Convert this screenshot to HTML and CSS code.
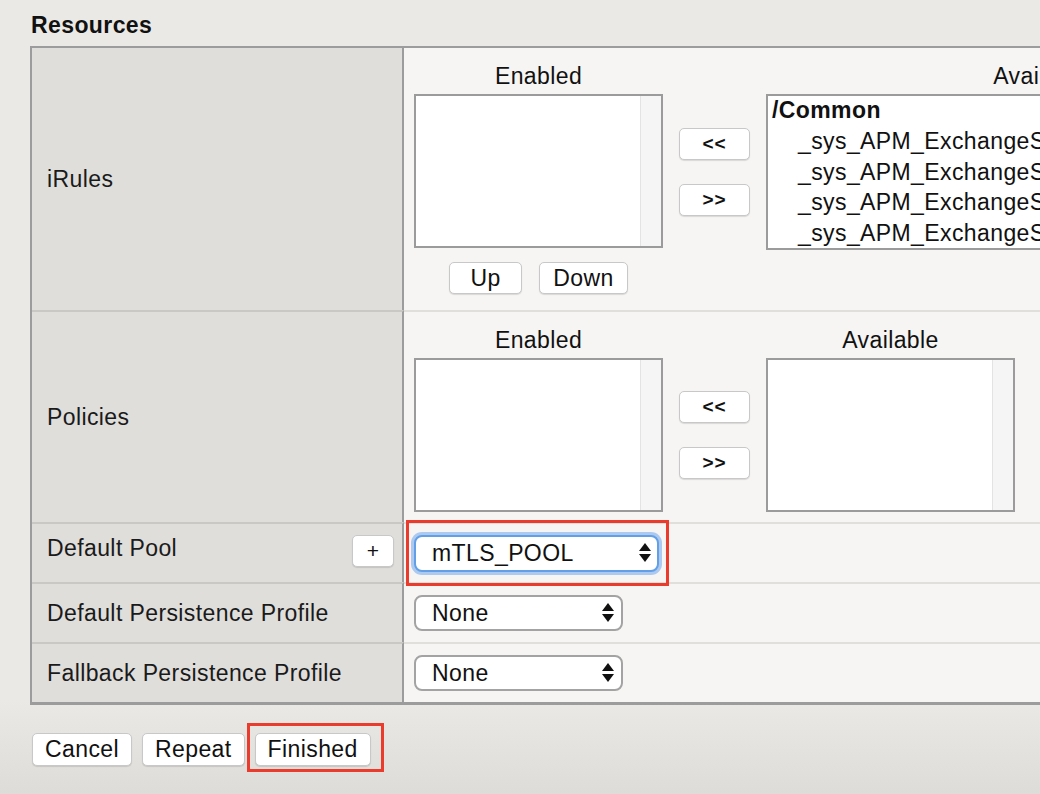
FILE: index.html
```html
<!DOCTYPE html>
<html>
<head>
<meta charset="utf-8">
<title>Resources</title>
<link rel="stylesheet" href="styles.css">
</head>
<body>
<h2 class="section-title">Resources</h2>
<div class="props">
  <div class="label">iRules</div>
  <div class="value pad-irules">
    <div class="dual">
      <div class="col-head">Enabled</div>
      <div></div>
      <div class="col-head">Available</div>
      <div class="listbox"><div class="list-body"></div><div class="scroll"></div></div>
      <div class="mover">
        <button class="btn mv">&lt;&lt;</button>
        <button class="btn mv">&gt;&gt;</button>
      </div>
      <div class="listbox avail-wide">
        <div class="list-body options">
          <div class="opt group">/Common</div>
          <div class="opt">_sys_APM_ExchangeSupport_OA_BasicAuth</div>
          <div class="opt">_sys_APM_ExchangeSupport_OA_NtlmAuth</div>
          <div class="opt">_sys_APM_ExchangeSupport_helper</div>
          <div class="opt">_sys_APM_ExchangeSupport_main</div>
        </div>
      </div>
      <div class="updown">
        <button class="btn btn-up">Up</button>
        <button class="btn btn-down">Down</button>
      </div>
    </div>
  </div>

  <div class="label divided">Policies</div>
  <div class="value divided pad-policies">
    <div class="dual">
      <div class="col-head">Enabled</div>
      <div></div>
      <div class="col-head">Available</div>
      <div class="listbox"><div class="list-body"></div><div class="scroll"></div></div>
      <div class="mover">
        <button class="btn mv">&lt;&lt;</button>
        <button class="btn mv">&gt;&gt;</button>
      </div>
      <div class="listbox"><div class="list-body"></div><div class="scroll"></div></div>
    </div>
  </div>

  <div class="label divided label-pool">
    <span class="label-text raised">Default Pool</span>
    <button class="btn btn-plus">+</button>
  </div>
  <div class="value divided row-short">
    <div class="annot annot-select">
      <div class="select select-focus">
        <span>mTLS_POOL</span>
        <svg class="arrows" width="12" height="20" viewBox="0 0 12 20"><polygon points="6,0 12,8 0,8" fill="#111"/><polygon points="0,11 12,11 6,19" fill="#111"/></svg>
      </div>
    </div>
  </div>

  <div class="label divided"><span class="label-text">Default Persistence Profile</span></div>
  <div class="value divided row-short">
    <div class="select">
      <span>None</span>
      <svg class="arrows" width="12" height="20" viewBox="0 0 12 20"><polygon points="6,0 12,8 0,8" fill="#111"/><polygon points="0,11 12,11 6,19" fill="#111"/></svg>
    </div>
  </div>

  <div class="label divided"><span class="label-text">Fallback Persistence Profile</span></div>
  <div class="value divided row-short">
    <div class="select">
      <span>None</span>
      <svg class="arrows" width="12" height="20" viewBox="0 0 12 20"><polygon points="6,0 12,8 0,8" fill="#111"/><polygon points="0,11 12,11 6,19" fill="#111"/></svg>
    </div>
  </div>
</div>

<div class="actions">
  <button class="btn btn-action">Cancel</button>
  <button class="btn btn-action">Repeat</button>
  <span class="annot annot-finished"><button class="btn btn-action">Finished</button></span>
</div>
</body>
</html>
```

FILE: styles.css
```css
html, body {
  margin: 0;
  padding: 0;
  overflow: hidden;
  height: 100%;
}

body {
  background: linear-gradient(to bottom, #ebe9e5 0, #ebe9e5 700px, #dedcd8 794px);
  font-family: "Liberation Sans", Arial, Helvetica, sans-serif;
  font-size: 23px;
  letter-spacing: 0.4px;
  color: #111;
}

.section-title {
  margin: 0;
  padding: 12px 0 0 31px;
  font-size: 23px;
  line-height: 26px;
  font-weight: 700;
  color: #111;
}

.props {
  margin: 8px 0 0 30px;
  display: grid;
  grid-template-columns: 372px 1200px;
  width: max-content;
  border: 2px solid #9c9c9c;
  border-right: none;
  border-bottom-width: 3px;
}

.label {
  box-sizing: border-box;
  background: #dfdedb;
  border-right: 2px solid #9c9c9c;
  padding-left: 15px;
  display: flex;
  align-items: center;
  line-height: 26px;
  color: #1a1a1a;
}

.value {
  background: #f6f5f3;
  padding-left: 10px;
}

.label.divided {
  border-top: 2px solid #c9c8c4;
}

.value.divided {
  border-top: 2px solid #e0dfdc;
}

.pad-irules {
  padding-top: 15px;
  padding-bottom: 16px;
}

.pad-policies {
  padding-top: 15px;
  padding-bottom: 10px;
}

.row-short {
  height: 58px;
  display: flex;
  align-items: center;
}

.dual {
  display: grid;
  grid-template-columns: 249px 71px max-content;
  column-gap: 16px;
}

.col-head {
  text-align: center;
  line-height: 26px;
  margin-bottom: 5px;
}

.listbox {
  box-sizing: border-box;
  width: 249px;
  height: 154px;
  border: 2px solid #9b9b9b;
  background: #fff;
  display: flex;
}

.list-body {
  flex: 1;
}

.scroll {
  width: 20px;
  background: #f5f5f5;
  border-left: 1px solid #e3e3e3;
}

.avail-wide {
  width: 551px;
  height: 156px;
}

.options {
  margin-top: -1px;
  line-height: 30.75px;
  white-space: nowrap;
  overflow: hidden;
}

.opt {
  padding-left: 30px;
}

.opt.group {
  padding-left: 4px;
  font-weight: 700;
}

.mover {
  align-self: center;
  display: flex;
  flex-direction: column;
  gap: 24px;
}

.btn {
  box-sizing: border-box;
  font-family: inherit;
  font-size: 23px;
  letter-spacing: 0.4px;
  color: #111;
  background: #fff;
  border: 1px solid #c8c8c8;
  border-radius: 5px;
  box-shadow: 0 1px 1px rgba(0, 0, 0, 0.12);
  height: 32px;
  padding: 0;
  margin: 0;
  line-height: 30px;
  text-align: center;
}

.btn.mv {
  width: 71px;
  font-size: 19px;
  letter-spacing: 1px;
  font-weight: 700;
}

.updown {
  grid-column: 1;
  display: flex;
  justify-content: center;
  gap: 17px;
  margin-top: 12px;
}

.btn-up {
  width: 73px;
}

.btn-down {
  width: 89px;
}

.label-pool {
  justify-content: space-between;
  padding-right: 8px;
}

.label-text.raised {
  margin-bottom: 10px;
}

.btn-plus {
  width: 42px;
  margin-bottom: 4px;
  font-size: 21px;
}

.select {
  box-sizing: border-box;
  width: 209px;
  height: 36px;
  border: 2px solid #a3a3a3;
  border-radius: 8px;
  background: #fff;
  display: flex;
  align-items: center;
  justify-content: space-between;
  padding: 0 7px 0 16px;
  line-height: 26px;
}

.select-focus {
  width: 245px;
  height: 37px;
  border-color: #639fe6;
  box-shadow: 0 0 0 3px rgba(132, 178, 238, 0.65);
  padding-right: 6px;
}

.arrows {
  display: block;
}

.annot {
  position: relative;
  display: inline-block;
}

.annot::after {
  content: "";
  position: absolute;
  border: 3px solid #ea3b2c;
  pointer-events: none;
}

.annot-select::after {
  top: -15px;
  bottom: -14px;
  left: -8px;
  right: -10px;
}

.actions {
  margin-top: 28px;
  padding-left: 32px;
  display: flex;
  gap: 10px;
  align-items: flex-start;
}

.btn-action {
  height: 33px;
  line-height: 31px;
  padding: 0 12px;
}

.annot-finished::after {
  top: -10px;
  bottom: -6px;
  left: -8px;
  right: -13px;
}
```
